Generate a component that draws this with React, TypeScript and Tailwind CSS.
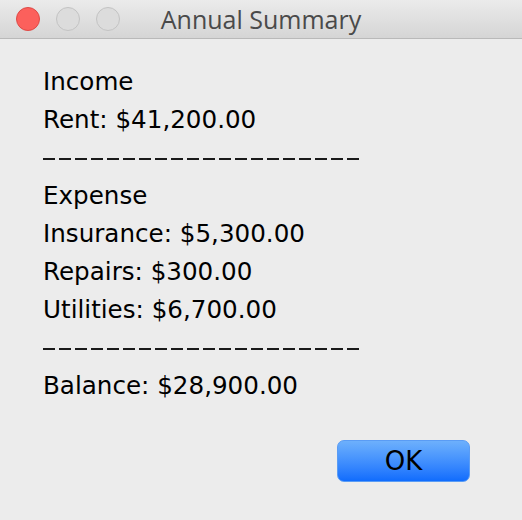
import React from "react";

function Dashes() {
  return (
    <div className="h-[38px] flex items-center gap-[4px] pt-[1px]">
      {Array.from({ length: 20 }).map((_, i) => (
        <span key={i} className="block w-[12px] h-[2px] bg-[#1a1a1a]" />
      ))}
    </div>
  );
}

export default function App() {
  const lines: string[] = [
    "Income",
    "Rent: $41,200.00",
    "__DASH__",
    "Expense",
    "Insurance: $5,300.00",
    "Repairs: $300.00",
    "Utilities: $6,700.00",
    "__DASH__",
    "Balance: $28,900.00",
  ];
  return (
    <div className="w-[522px] h-[520px] bg-[#ececec] flex flex-col overflow-hidden">
      <div className="relative h-[39px] shrink-0 bg-gradient-to-b from-[#ebebeb] to-[#d5d5d5] border-b border-[#b9b9b9] flex items-center">
        <div className="flex gap-4 pl-4">
          <div className="w-6 h-6 rounded-full bg-[#fc605c] border border-[#de4a46]" />
          <div className="w-6 h-6 rounded-full bg-[#dcdcdc] border border-[#c3c3c3]" />
          <div className="w-6 h-6 rounded-full bg-[#dcdcdc] border border-[#c3c3c3]" />
        </div>
        <div
          className="absolute inset-0 flex items-center justify-center text-[25px] text-[#4a4a4a] pt-px"
          style={{ fontFamily: '"Open Sans", "Liberation Sans", sans-serif' }}
        >
          Annual Summary
        </div>
      </div>
      <div
        className="pl-[43px] pt-[24px] text-[24.6px] leading-[38px] text-black"
        style={{ fontFamily: '"DejaVu Sans", sans-serif' }}
      >
        {lines.map((l, i) =>
          l === "__DASH__" ? <Dashes key={i} /> : <div key={i}>{l}</div>
        )}
      </div>
      <div className="flex justify-end pr-[52px] mt-[35px]">
        <button
          className="w-[133px] h-[42px] rounded-[7px] border border-[#5a9cf4] bg-gradient-to-b from-[#6db0fc] to-[#0f6cfd] text-black text-[26px] leading-none"
          style={{ fontFamily: '"DejaVu Sans", sans-serif' }}
        >
          OK
        </button>
      </div>
    </div>
  );
}
